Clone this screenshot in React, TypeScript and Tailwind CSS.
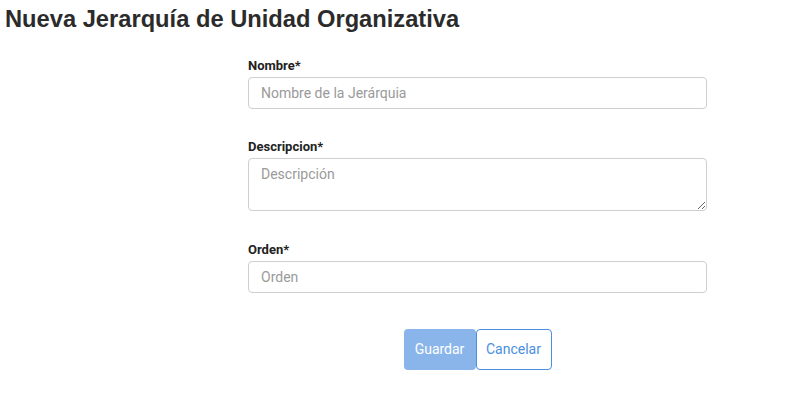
import React from 'react';

const fields = [
  { label: 'Nombre*', placeholder: 'Nombre de la Jerárquia', type: 'input', gap: 'mt-0' },
  { label: 'Descripcion*', placeholder: 'Descripción', type: 'textarea', gap: 'mt-[29px]' },
  { label: 'Orden*', placeholder: 'Orden', type: 'input', gap: 'mt-[30px]' },
];

export default function App() {
  return (
    <div className="w-[785px] h-[393px] bg-white font-['Roboto',sans-serif] text-[#212529]">
      {/* Header */}
      <h1 className="pl-[5px] pt-[4px] text-[23.7px] leading-[30px] font-bold text-[#2b2b2b] font-['Liberation_Sans',sans-serif]">
        Nueva Jerarquía de Unidad Organizativa
      </h1>

      {/* Form */}
      <form className="ml-[248px] w-[459px] pt-[23px] flex flex-col">
        {fields.map((f) => (
          <div key={f.label} className={`flex flex-col ${f.gap}`}>
            <label className="text-[13px] leading-[18px] font-bold text-[#222] mb-[2px]">{f.label}</label>
            {f.type === 'textarea' ? (
              <textarea
                placeholder={f.placeholder}
                className="h-[53px] rounded-[4px] border border-[#cfcfcf] px-3 py-[5px] text-[14px] leading-[20px] placeholder:text-[#9a9a9a] outline-none"
              />
            ) : (
              <input
                placeholder={f.placeholder}
                className="h-[32px] rounded-[4px] border border-[#cfcfcf] px-3 text-[14px] placeholder:text-[#9a9a9a] outline-none"
              />
            )}
          </div>
        ))}

        {/* Actions */}
        <div className="flex justify-center mt-[36px]">
          <button type="button" className="h-[41px] w-[72px] rounded-[4px] bg-[#8ab5ea] text-white text-[14px]">
            Guardar
          </button>
          <button type="button" className="h-[41px] w-[76px] rounded-[4px] border border-[#4a8fe0] bg-white text-[#4a8fe0] text-[14px]">
            Cancelar
          </button>
        </div>
      </form>
    </div>
  );
}
